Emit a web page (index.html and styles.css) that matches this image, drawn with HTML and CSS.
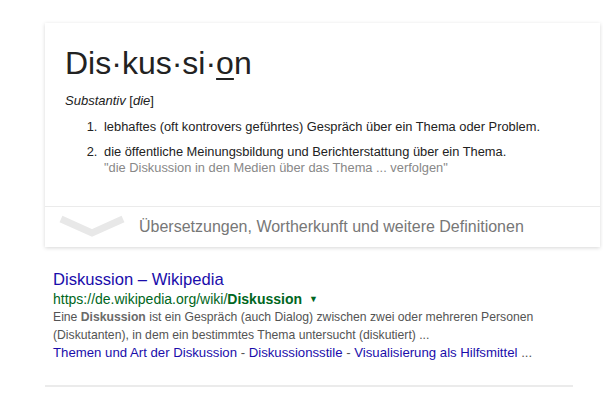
FILE: index.html
```html
<!DOCTYPE html>
<html lang="de">
<head>
    <meta charset="UTF-8">
    <meta name="viewport" content="width=device-width, initial-scale=1.0">
    <title>Diskussion</title>
    <link rel="stylesheet" href="styles.css">
</head>
<body>

    <div class="page">
        <div class="card">
            <div class="card-body">
                <h1 class="word">Dis·kus·si·<span class="stress">o</span>n</h1>
                <div class="wordclass"><i>Substantiv</i> [<i>die</i>]</div>

                <ol class="defs">
                    <li>lebhaftes (oft kontrovers geführtes) Gespräch über ein Thema oder Problem.</li>
                    <li>die öffentliche Meinungsbildung und Berichterstattung über ein Thema.
                        <div class="example">"die Diskussion in den Medien über das Thema ... verfolgen"</div>
                    </li>
                </ol>
            </div>

            <div class="card-more">
                <svg class="chevron" width="66" height="24" viewBox="0 0 66 24">
                    <polyline points="2,4 33,18 64,4" fill="none" stroke="#e8e8e8" stroke-width="7"/>
                </svg>
                <span>Übersetzungen, Wortherkunft und weitere Definitionen</span>
            </div>
        </div>

        <div class="result">
            <a class="result-title" href="#">Diskussion – Wikipedia</a>
            <div class="result-url">https://de.wikipedia.org/wiki/<b>Diskussion</b> <span class="arrow">▼</span></div>
            <div class="result-snippet">Eine <b>Diskussion</b> ist ein Gespräch (auch Dialog) zwischen zwei oder mehreren Personen (Diskutanten), in dem ein bestimmtes Thema untersucht (diskutiert) ...</div>
            <div class="result-links">
                <a href="#">Themen und Art der Diskussion</a> - <a href="#">Diskussionsstile</a> - <a href="#">Visualisierung als Hilfsmittel</a> ...
            </div>
        </div>

        <div class="separator"></div>
    </div>

</body>
</html>
```

FILE: styles.css
```css
body {
    font-family: 'Liberation Sans', Arial, sans-serif;
    background: #fff;
    color: #222;
    margin: 0;
    padding: 0;
}
.page {
    padding: 23px 0 0 45px;
}
.card {
    width: 555px;
    background: #fff;
    box-shadow: 0 1px 4px rgba(0, 0, 0, 0.16);
}
.card-body {
    padding: 20px 20px 30px 20px;
    border-bottom: 1px solid #ebebeb;
}
.word {
    font-size: 32px;
    font-weight: normal;
    margin: 0;
    line-height: 40px;
    color: #222;
}
.stress {
    text-decoration: underline;
    text-underline-offset: 4px;
    text-decoration-thickness: 2px;
}
.wordclass {
    font-size: 13px;
    margin-top: 10px;
    line-height: 16px;
}
.defs {
    font-size: 12.85px;
    line-height: 16px;
    margin: 10px 0 0 0;
    padding-left: 36px;
}
.defs li {
    padding-left: 3px;
    margin-bottom: 9px;
}
.defs li:last-child {
    margin-bottom: 0;
}
.example {
    color: #888;
}
.card-more {
    display: flex;
    align-items: center;
    height: 40px;
    font-size: 16px;
    color: #777;
}
.chevron {
    margin: 0 14px 0 14px;
}
.result {
    margin-top: 22px;
    padding-left: 8px;
    width: 520px;
}
.result-title {
    display: block;
    font-size: 16.6px;
    line-height: 22px;
    color: #1a0dab;
    text-decoration: none;
}
.result-url {
    font-size: 14px;
    line-height: 16px;
    color: #006621;
}
.arrow {
    font-size: 9px;
    margin-left: 3px;
    vertical-align: 2px;
}
.result-snippet {
    font-size: 12.2px;
    line-height: 18px;
    color: #545454;
    margin-top: 1px;
}
.result-snippet b {
    color: #6a6a6a;
}
.result-links {
    font-size: 13.2px;
    line-height: 18px;
    color: #545454;
}
.result-links a {
    color: #1a0dab;
    text-decoration: none;
}
.separator {
    width: 528px;
    border-top: 2px solid #ebebeb;
    margin-top: 23px;
}
```
